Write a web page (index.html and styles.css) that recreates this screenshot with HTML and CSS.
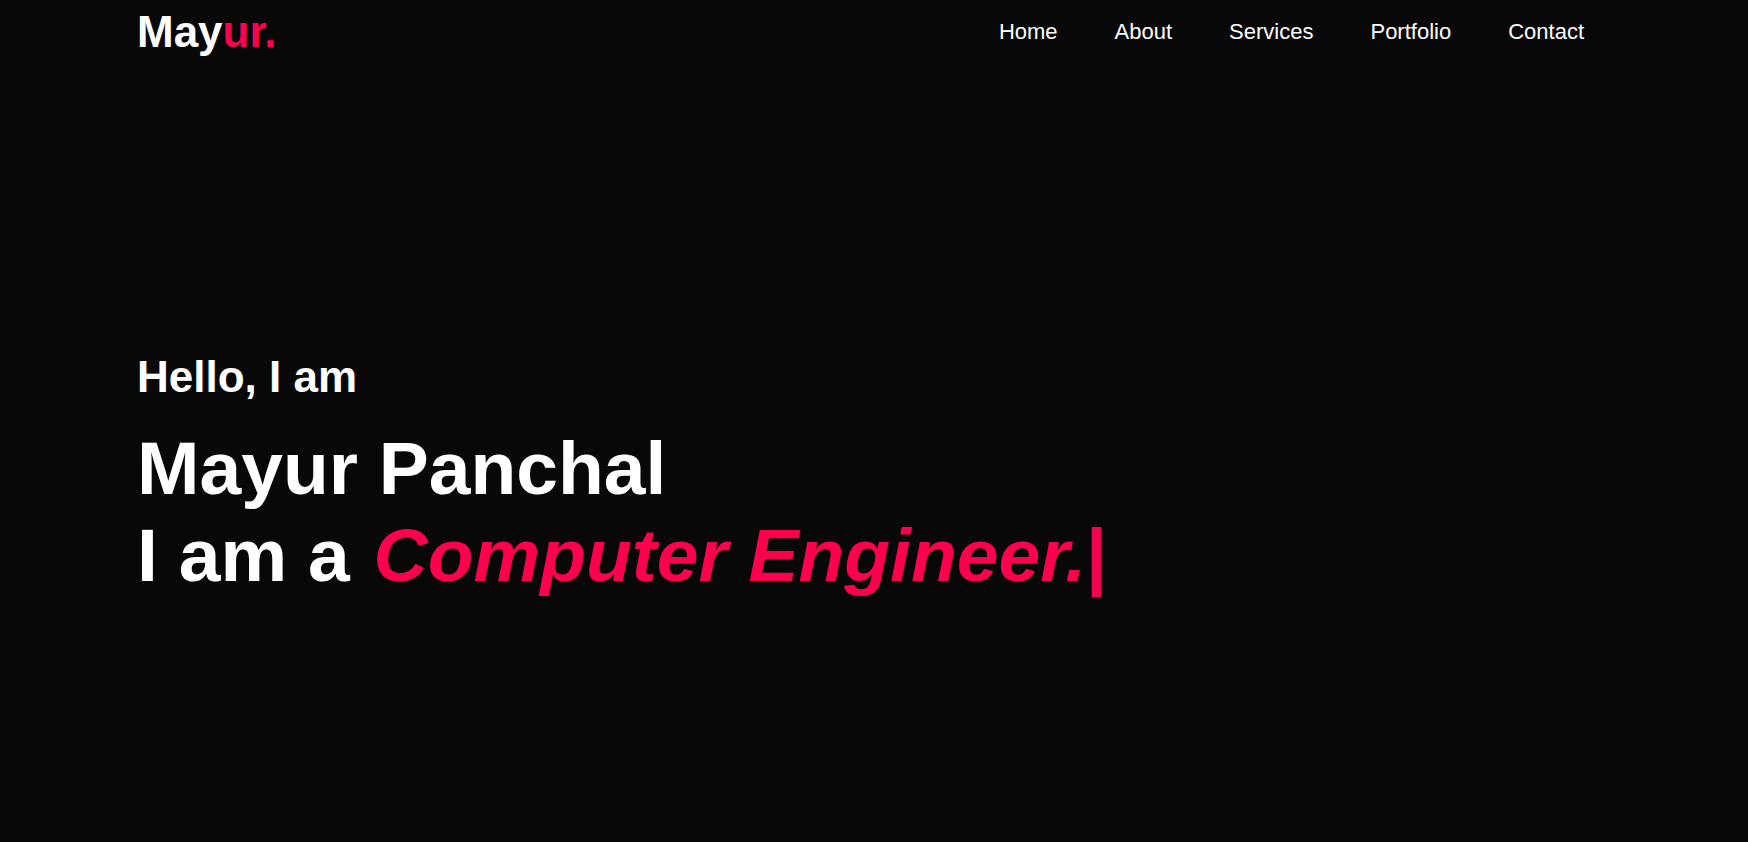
FILE: index.html
```html
<!DOCTYPE html>
<html lang="en">
<head>
<meta charset="utf-8">
<title>Mayur Panchal</title>
<link rel="stylesheet" href="styles.css">
</head>
<body>
<div class="page">
  <header class="header">
    <a class="logo" href="#">May<span class="accent">ur.</span></a>
    <nav class="nav">
      <a href="#">Home</a>
      <a href="#">About</a>
      <a href="#">Services</a>
      <a href="#">Portfolio</a>
      <a href="#">Contact</a>
    </nav>
  </header>
  <section class="hero">
    <p class="hello">Hello, I am</p>
    <h1 class="title">Mayur Panchal<br>I am a <span class="typed">Computer Engineer.</span><span class="cursor">|</span></h1>
  </section>
</div>
</body>
</html>
```

FILE: styles.css
```css
* { box-sizing: border-box; }
html, body {
  margin: 0;
  padding: 0;
  background: #080808;
  color: #ffffff;
  font-family: "Liberation Sans", Arial, sans-serif;
}
.page {
  min-height: 842px;
  padding: 7px 164px 0 137px;
}
.header {
  display: flex;
  justify-content: space-between;
  align-items: flex-start;
}
.logo {
  font-size: 44px;
  font-weight: 700;
  color: #ffffff;
  text-decoration: none;
  line-height: normal;
}
.accent { color: #ff004f; }
.nav {
  display: flex;
  gap: 57px;
  margin-top: 12px;
}
.nav a {
  font-size: 22px;
  color: #ffffff;
  text-decoration: none;
  line-height: normal;
}
.hero {
  padding-top: 295px;
}
.hello {
  margin: 0;
  font-size: 44px;
  font-weight: 700;
  line-height: normal;
}
.title {
  margin: 23px 0 0;
  font-size: 75px;
  font-weight: 700;
  line-height: 87px;
}
.typed {
  color: #ff004f;
  font-style: italic;
  margin-left: 3px;
}
.cursor {
  color: #f0044f;
  font-style: normal;
}
```
